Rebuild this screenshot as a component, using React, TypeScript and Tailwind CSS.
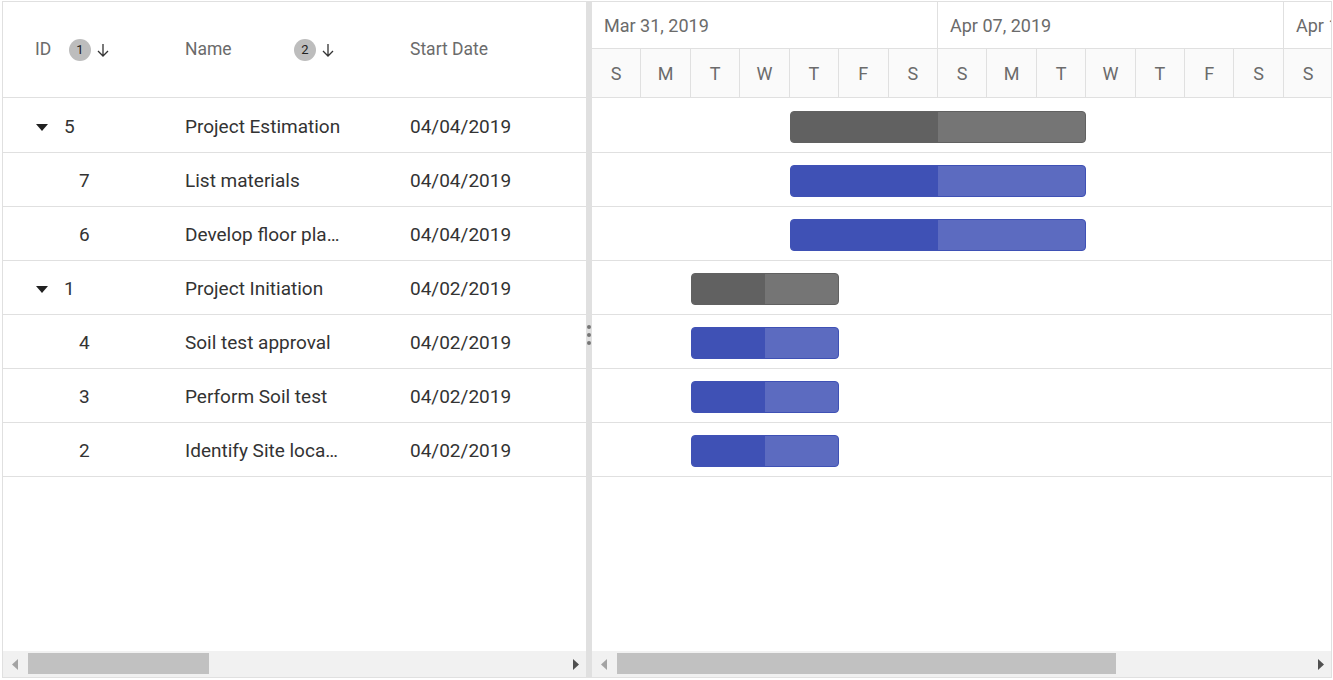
import React from "react";

interface Task {
  id: number;
  name: string;
  date: string;
  parent?: boolean;
  start: number;
  days: number;
}

const DAY = 49.43;

const tasks: Task[] = [
  { id: 5, name: "Project Estimation", date: "04/04/2019", parent: true, start: 4, days: 6 },
  { id: 7, name: "List materials", date: "04/04/2019", start: 4, days: 6 },
  { id: 6, name: "Develop floor plan for estimation", date: "04/04/2019", start: 4, days: 6 },
  { id: 1, name: "Project Initiation", date: "04/02/2019", parent: true, start: 2, days: 3 },
  { id: 4, name: "Soil test approval", date: "04/02/2019", start: 2, days: 3 },
  { id: 3, name: "Perform Soil test", date: "04/02/2019", start: 2, days: 3 },
  { id: 2, name: "Identify Site location", date: "04/02/2019", start: 2, days: 3 },
];

const dayLetters = ["S", "M", "T", "W", "T", "F", "S", "S", "M", "T", "W", "T", "F", "S", "S"];

function SortBadge({ n }: { n: number }) {
  return (
    <div className="flex items-center">
      <span className="w-[22px] h-[22px] rounded-full bg-[#bdbdbd] text-[#212121] text-[13px] flex items-center justify-center">
        {n}
      </span>
      <svg className="ml-[5px]" width="14" height="16" viewBox="0 0 14 16" fill="none">
        <path d="M7 2v12M2 9l5 5 5-5" stroke="#333" strokeWidth="1.3" />
      </svg>
    </div>
  );
}

function Caret() {
  return (
    <svg width="12" height="7" viewBox="0 0 12 7">
      <path d="M0 0h12L6 7z" fill="#212121" />
    </svg>
  );
}

function ScrollBar({ thumbLeft, thumbWidth }: { thumbLeft: string; thumbWidth: string }) {
  return (
    <div className="relative h-[26px] bg-[#f1f1f1] shrink-0">
      <svg className="absolute left-[9px] top-[8px]" width="6" height="11" viewBox="0 0 6 11">
        <path d="M6 0v11L0 5.5z" fill="#a3a3a3" />
      </svg>
      <div
        className="absolute top-[2px] h-[21px] bg-[#c1c1c1]"
        style={{ left: thumbLeft, width: thumbWidth }}
      />
      <svg className="absolute right-[7px] top-[8px]" width="6" height="11" viewBox="0 0 6 11">
        <path d="M0 0v11L6 5.5z" fill="#505050" />
      </svg>
    </div>
  );
}

export default function App() {
  return (
    <div className="pt-[1px] pl-[2px] bg-white" style={{ fontFamily: "Roboto, 'Liberation Sans', sans-serif" }}>
      <div className="w-[1330px] h-[677px] border border-[#e0e0e0] flex overflow-hidden">
        {/* Grid side */}
        <div className="w-[583px] shrink-0 flex flex-col">
          <div className="h-[96px] shrink-0 border-b border-[#e0e0e0] flex items-center text-[17.5px] text-[#6b6b6b]">
            <div className="w-[167px] pl-[32px] flex items-center">
              <span className="w-[34px]">ID</span>
              <SortBadge n={1} />
            </div>
            <div className="w-[225px] pl-[15px] flex items-center">
              <span className="w-[109px]">Name</span>
              <SortBadge n={2} />
            </div>
            <div className="flex-1 pl-[15px]">Start Date</div>
          </div>
          <div className="flex-1 pt-[1px]">
            {tasks.map((t) => (
              <div key={t.id} className="h-[54px] pt-[3px] border-b border-[#e0e0e0] flex items-center text-[19px] text-[#333333]">
                <div className={"w-[167px] flex items-center " + (t.parent ? "pl-[33px]" : "pl-[76px]")}>
                  {t.parent && (
                    <span className="w-[28px] flex">
                      <Caret />
                    </span>
                  )}
                  <span>{t.id}</span>
                </div>
                <div className="w-[225px] pl-[15px]">
                  <div className="w-[159px] truncate">{t.name}</div>
                </div>
                <div className="flex-1 pl-[15px]">{t.date}</div>
              </div>
            ))}
          </div>
          <ScrollBar thumbLeft="25px" thumbWidth="181px" />
        </div>

        {/* Splitter */}
        <div className="w-[6px] shrink-0 bg-[#e0e0e0] flex flex-col items-center justify-center gap-[4px] pb-[10px]">
          <span className="w-[4px] h-[4px] rounded-full bg-[#757575]" />
          <span className="w-[4px] h-[4px] rounded-full bg-[#757575]" />
          <span className="w-[4px] h-[4px] rounded-full bg-[#757575]" />
        </div>

        {/* Chart side */}
        <div className="flex-1 flex flex-col overflow-hidden">
          <div className="h-[96px] shrink-0 border-b border-[#e0e0e0] flex flex-col text-[#6b6b6b] text-[18px]">
            <div className="h-[47px] border-b border-[#e0e0e0] flex shrink-0">
              {["Mar 31, 2019", "Apr 07, 2019", "Apr 14, 2019"].map((w) => (
                <div key={w} className="w-[346px] shrink-0 border-r border-[#e0e0e0] pl-[12px] flex items-center whitespace-nowrap">
                  {w}
                </div>
              ))}
            </div>
            <div className="flex-1 flex bg-[#fafafa]">
              {dayLetters.map((d, i) => (
                <div key={i} className="w-[49.43px] shrink-0 border-r border-[#e0e0e0] flex items-center justify-center">
                  {d}
                </div>
              ))}
            </div>
          </div>
          <div className="flex-1 pt-[1px]">
            {tasks.map((t) => {
              const dark = t.parent ? "#616161" : "#3f51b5";
              const light = t.parent ? "#757575" : "#5c6bc0";
              return (
                <div key={t.id} className="h-[54px] border-b border-[#e0e0e0] relative">
                  <div
                    className="absolute top-[12px] h-[32px] rounded-[4px] border overflow-hidden flex"
                    style={{ left: t.start * DAY, width: t.days * DAY, borderColor: dark, background: light }}
                  >
                    <div className="h-full w-1/2" style={{ background: dark }} />
                  </div>
                </div>
              );
            })}
          </div>
          <ScrollBar thumbLeft="25px" thumbWidth="499px" />
        </div>
      </div>
    </div>
  );
}
